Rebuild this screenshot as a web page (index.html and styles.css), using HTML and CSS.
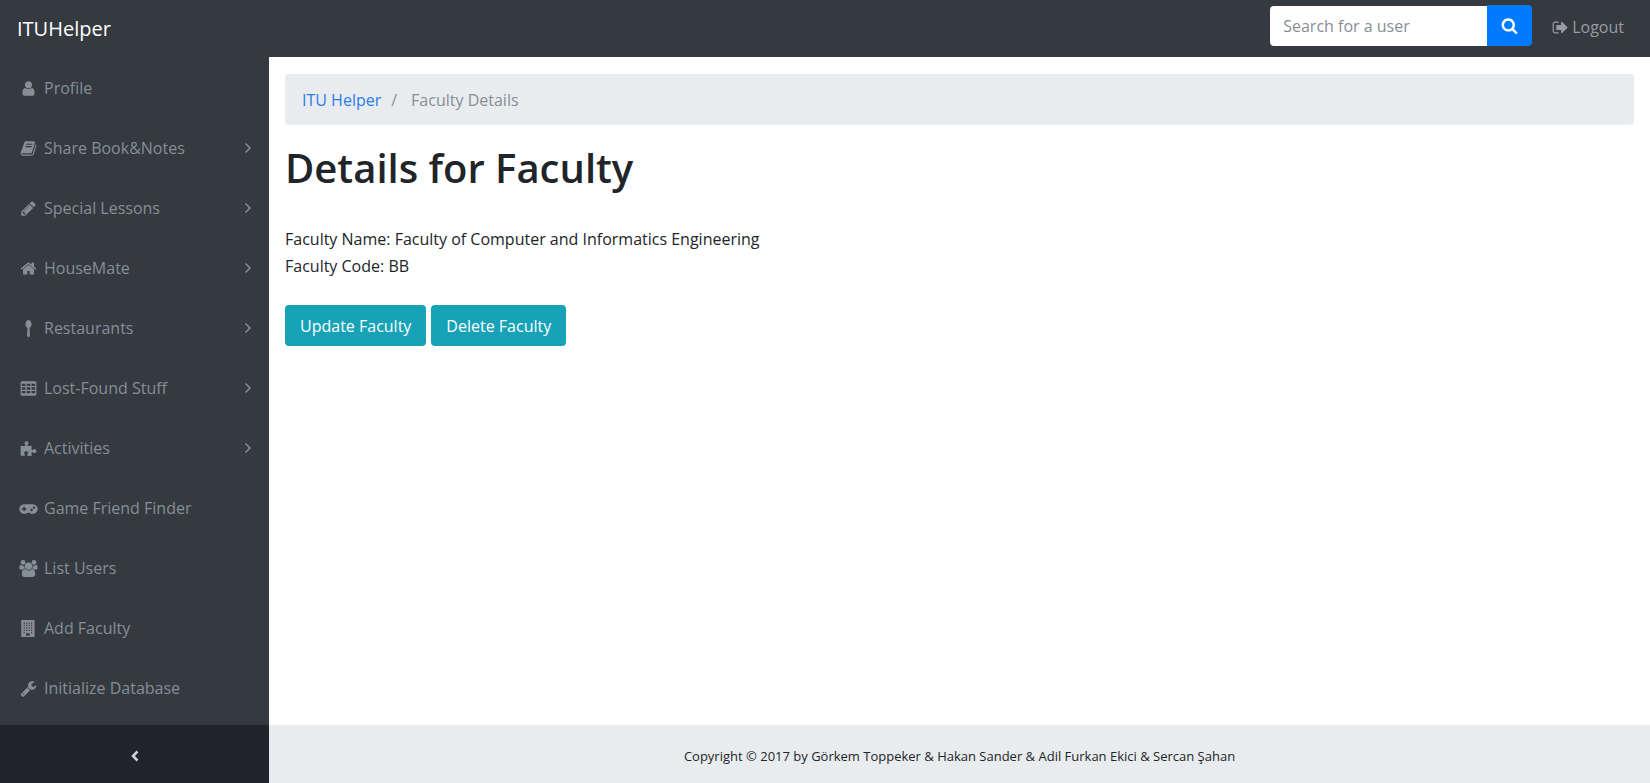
FILE: index.html
```html
<!DOCTYPE html>
<html lang="en">
<head>
<meta charset="utf-8">
<title>ITUHelper</title>
<link rel="stylesheet" href="styles.css">
</head>
<body>
<header class="navbar">
  <a class="brand" href="#">ITUHelper</a>
  <div class="navbar-tools">
    <form class="search">
      <input class="search-input" type="text" placeholder="Search for a user" aria-label="Search for a user">
      <button class="search-button" type="button" aria-label="Search"><svg class="icon" viewBox="0 0 1792 1792"><path d="M1216 832q0-185-131.5-316.5t-316.5-131.5-316.5 131.5-131.5 316.5 131.5 316.5 316.5 131.5 316.5-131.5 131.5-316.5zm512 832q0 52-38 90t-90 38q-54 0-90-38l-343-342q-179 124-399 124-143 0-273.5-55.5t-225-150-150-225-55.5-273.5 55.5-273.5 150-225 225-150 273.5-55.5 273.5 55.5 225 150 150 225 55.5 273.5q0 220-124 399l343 343q37 37 37 90z"/></svg></button>
    </form>
    <a class="logout" href="#"><svg class="icon" viewBox="0 0 1792 1792"><path d="M704 1440q0 4 1 20t.5 26.5-3 23.5-10 19.5-20.5 6.5h-320q-119 0-203.5-84.5t-84.5-203.5v-704q0-119 84.5-203.5t203.5-84.5h320q13 0 22.5 9.5t9.5 22.5q0 4 1 20t.5 26.5-3 23.5-10 19.5-20.5 6.5h-320q-66 0-113 47t-47 113v704q0 66 47 113t113 47h312l11.5 1 11.5 3 8 5.5 7 9 2 13.5zm928-544q0 26-19 45l-544 544q-19 19-45 19t-45-19-19-45v-288h-448q-26 0-45-19t-19-45v-384q0-26 19-45t45-19h448v-288q0-26 19-45t45-19 45 19l544 544q19 19 19 45z"/></svg>Logout</a>
  </div>
</header>
<div class="layout">
  <nav class="sidebar" aria-label="Main">
    <ul class="menu">
      <li><a class="menu-link" href="#"><svg class="icon" viewBox="0 0 1792 1792"><path d="M1536 1399q0 109-62.5 187t-150.5 78h-854q-88 0-150.5-78t-62.5-187q0-85 8.5-160.5t31.5-152 58.5-131 94-89 134.5-34.5q131 128 313 128t313-128q76 0 134.5 34.5t94 89 58.5 131 31.5 152 8.5 160.5zm-256-887q0 159-112.5 271.5t-271.5 112.5-271.5-112.5-112.5-271.5 112.5-271.5 271.5-112.5 271.5 112.5 112.5 271.5z"/></svg><span>Profile</span></a></li>
      <li><a class="menu-link" href="#"><svg class="icon" viewBox="0 0 1792 1792"><path d="M1703 478q40 57 18 129l-275 906q-19 64-76.5 107.5t-122.5 43.5h-923q-77 0-148.5-53.5t-99.5-131.5q-24-67-2-127 0-4 3-27t4-37q1-8-3-21.5t-3-19.5q2-11 8-21t16.5-23.5 16.5-23.5q23-38 45-91.5t30-91.5q3-10 .5-30t-.5-28q3-11 17-28t17-23q21-36 42-92t25-90q1-9-2.5-32t.5-28q4-13 22-30.5t22-22.5q19-26 42.5-84.5t27.5-96.5q1-8-3-25.5t-2-26.5q2-8 9-18t18-23 17-21q8-12 16.5-30.5t15-35 16-36 19.5-32 26.5-23.5 36-11.5 47.5 5.5l-1 3q38-9 51-9h761q74 0 114 56t18 130l-274 906q-36 119-71.5 153.5t-128.5 34.5h-869q-27 0-38 15-11 16-1 43 24 70 144 70h923q29 0 56-15.5t35-41.5l300-987q7-22 5-57 38 15 59 43zm-1064 2q-4 13 2 22.5t20 9.5h608q13 0 25.5-9.5t16.5-22.5l21-64q4-13-2-22.5t-20-9.5h-608q-13 0-25.5 9.5t-16.5 22.5zm-83 256q-4 13 2 22.5t20 9.5h608q13 0 25.5-9.5t16.5-22.5l21-64q4-13-2-22.5t-20-9.5h-608q-13 0-25.5 9.5t-16.5 22.5z"/></svg><span>Share Book&amp;Notes</span><svg class="chevron" viewBox="0 0 8 12"><path d="M1.500 1.500 6 6 1.500 10.500"/></svg></a></li>
      <li><a class="menu-link" href="#"><svg class="icon" viewBox="0 0 1792 1792"><path d="M491 1536l91-91-235-235-91 91v107h128v128h107zm523-928q0-22-22-22-10 0-17 7l-542 542q-7 7-7 17 0 22 22 22 10 0 17-7l542-542q7-7 7-17zm-54-192l416 416-832 832h-416v-416zm683 96q0 53-37 90l-166 166-416-416 166-165q36-38 90-38 53 0 91 38l235 234q37 39 37 91z"/></svg><span>Special Lessons</span><svg class="chevron" viewBox="0 0 8 12"><path d="M1.500 1.500 6 6 1.500 10.500"/></svg></a></li>
      <li><a class="menu-link" href="#"><svg class="icon" viewBox="0 0 1792 1792"><path d="M1472 992v480q0 26-19 45t-45 19h-384v-384h-256v384h-384q-26 0-45-19t-19-45v-480q0-1 .5-3t.5-3l575-474 575 474q1 2 1 6zm223-69l-62 74q-8 9-21 11h-3q-13 0-21-7l-692-577-692 577q-12 8-24 7-13-2-21-11l-62-74q-8-10-7-23.5t11-21.500l719-599q32-26 76-26t76 26l244 204v-195q0-14 9-23t23-9h192q14 0 23 9t9 23v408l219 182q10 8 11 21.500t-7 23.500z"/></svg><span>HouseMate</span><svg class="chevron" viewBox="0 0 8 12"><path d="M1.500 1.500 6 6 1.500 10.500"/></svg></a></li>
      <li><a class="menu-link" href="#"><svg class="icon" viewBox="0 0 1792 1792"><path d="M1216 448q0 150-60 250t-150 135l40 815q2 58-37 101t-97 43h-32q-58 0-97-43t-37-101l40-815q-90-35-150-135t-60-250q0-120 44-223t116-164 160-61 160 61 116 164 44 223z"/></svg><span>Restaurants</span><svg class="chevron" viewBox="0 0 8 12"><path d="M1.500 1.500 6 6 1.500 10.500"/></svg></a></li>
      <li><a class="menu-link" href="#"><svg class="icon" viewBox="0 0 1792 1792"><path fill-rule="evenodd" d="M224 128h1344q66 0 113 47t47 113v1216q0 66-47 113t-113 47H224q-66 0-113-47t-47-113V288q0-66 47-113t113-47zM192 384v256h384V384zM704 384v256h384V384zM1216 384v256h384V384zM192 768v256h384V768zM704 768v256h384V768zM1216 768v256h384V768zM192 1152v256h384v-256zM704 1152v256h384v-256zM1216 1152v256h384v-256z"/></svg><span>Lost-Found Stuff</span><svg class="chevron" viewBox="0 0 8 12"><path d="M1.500 1.500 6 6 1.500 10.500"/></svg></a></li>
      <li><a class="menu-link" href="#"><svg class="icon" viewBox="0 0 1792 1792"><path d="M64 612q200 40 360 30c90-8 136-42 136-90 0-60-80-90-80-218C480 206 570 128 690 128s205 72 205 192c0 130-95 160-95 240 0 62 55 84 130 84 100 0 190-24 310-32-12 110-30 200-30 300 0 80 26 130 90 130 84 0 105-90 228-90 120 0 200 90 200 210 0 125-75 215-195 215-130 0-155-80-233-80-50 0-85 36-85 96 0 90 25 150 25 255-130 16-240 26-340 26-90 0-140-28-140-90 0-74 95-110 95-230 0-110-90-180-200-180-120 0-215 70-215 190 0 125 85 160 85 222 0 60-40 88-120 88-115 0-220-10-341-38z"/></svg><span>Activities</span><svg class="chevron" viewBox="0 0 8 12"><path d="M1.500 1.500 6 6 1.500 10.500"/></svg></a></li>
      <li><a class="menu-link" href="#"><svg class="icon icon-wide" viewBox="0 0 1920 1792"><path fill-rule="evenodd" d="M512 448h896a512 512 0 1 1-338 896H850A512 512 0 1 1 512 448zM416 704v160H256v160h160v160h160v-160h160V864H576V704zM1280 928a128 128 0 1 0 0 256 128 128 0 1 0 0-256zM1536 672a128 128 0 1 0 0 256 128 128 0 1 0 0-256z"/></svg><span>Game Friend Finder</span></a></li>
      <li><a class="menu-link" href="#"><svg class="icon icon-wide" viewBox="0 0 1920 1792"><circle cx="384" cy="256" r="256"/><circle cx="1536" cy="256" r="256"/><circle cx="960" cy="640" r="384"/><path d="M593 896q-162 5-265 128H194q-82 0-138-40.500T0 865q0-353 124-353 6 0 43.500 21t97.500 42.500T384 597q67 0 133-23-5 37-5 66 0 139 81 256zM1664 1533q0 120-73 189.500t-194 69.500H523q-121 0-194-69.500T256 1533q0-53 3.500-103.500t14-109T300 1212t43-97.500 62-81 85.500-53.500T602 960q10 0 43 21.500t73 48 107 48 135 21.500 135-21.500 107-48 73-48 43-21.500q61 0 111.500 20t85.500 53.500 62 81 43 97.500 26.500 108.500 14 109 3.500 103.500zM1920 865q0 78-56 118.500t-138 40.500h-134q-103-123-265-128 81-117 81-256 0-29-5-66 66 23 133 23 59 0 119-21.500t97.500-42.500 43.500-21q124 0 124 353z"/></svg><span>List Users</span></a></li>
      <li><a class="menu-link" href="#"><svg class="icon" viewBox="0 0 1792 1792"><path fill-rule="evenodd" d="M192 0h1280q64 0 64 64v1664q0 64-64 64H192q-64 0-64-64V64q0-64 64-64zM384 256v128h128V256zM640 256v128h128V256zM896 256v128h128V256zM1152 256v128h128V256zM384 512v128h128V512zM640 512v128h128V512zM896 512v128h128V512zM1152 512v128h128V512zM384 768v128h128V768zM640 768v128h128V768zM896 768v128h128V768zM1152 768v128h128V768zM384 1024v128h128v-128zM640 1024v128h128v-128zM896 1024v128h128v-128zM1152 1024v128h128v-128zM384 1280v128h128v-128zM1152 1280v128h128v-128zM640 1408v256h384v-256z"/></svg><span>Add Faculty</span></a></li>
      <li><a class="menu-link" href="#"><svg class="icon" viewBox="0 0 1792 1792"><path d="M448 1472q0-26-19-45t-45-19-45 19-19 45 19 45 45 19 45-19 19-45zm644-420l-682 682q-37 37-90 37-52 0-91-37l-106-108q-38-36-38-90 0-53 38-91l681-681q39 98 114.500 173.500t173.500 114.500zm634-435q0 39-23 106-47 134-164.500 217.500t-258.500 83.500q-185 0-316.500-131.500t-131.500-316.500 131.500-316.500 316.500-131.500q58 0 121.500 16.500t107.500 46.500q16 11 16 28t-16 28l-293 169v224l193 107q5-3 79-48.500t135.500-81 70.500-35.500q15 0 23.500 10t8.500 25z"/></svg><span>Initialize Database</span></a></li>
    </ul>
    <button class="sidebar-toggle" type="button" aria-label="Collapse menu"><svg class="chevron chevron-bold" viewBox="0 0 8 12"><path d="M6.500 1.500 2 6 6.500 10.500"/></svg></button>
  </nav>
  <div class="page">
    <main class="content">
      <nav class="breadcrumb" aria-label="Breadcrumb">
        <a class="breadcrumb-link" href="#">ITU Helper</a>
        <span class="breadcrumb-separator">/</span>
        <span class="breadcrumb-current">Faculty Details</span>
      </nav>
      <h1 class="title">Details for Faculty</h1>
      <p class="details">Faculty Name: Faculty of Computer and Informatics Engineering<br>Faculty Code: BB</p>
      <div class="actions">
        <button class="button" type="button">Update Faculty</button>
        <button class="button" type="button">Delete Faculty</button>
      </div>
    </main>
    <footer class="footer">Copyright © 2017 by Görkem Toppeker &amp; Hakan Sander &amp; Adil Furkan Ekici &amp; Sercan Şahan</footer>
  </div>
</div>
</body>
</html>
```
FILE: styles.css
```css
* {
  box-sizing: border-box;
}

body {
  display: flex;
  flex-direction: column;
  min-height: 100vh;
  margin: 0;
  background: #fff;
  color: #212529;
  font-family: "Segoe UI", "Open Sans", "Noto Sans", sans-serif;
  font-size: 16px;
  line-height: 27px;
}

a {
  text-decoration: none;
}

button,
input {
  font: inherit;
}

.icon {
  width: 17px;
  height: 17px;
  fill: currentColor;
}

.icon-wide {
  width: 19px;
}

.navbar {
  display: flex;
  align-items: center;
  justify-content: space-between;
  height: 57px;
  padding: 0 26px 6px 17px;
  background: #343a40;
}

.brand {
  padding-top: 6px;
  color: #fff;
  font-size: 20px;
}

.navbar-tools,
.search,
.logout {
  display: flex;
  align-items: center;
}

.navbar-tools {
  gap: 20px;
}

.search-input {
  width: 217px;
  height: 40px;
  padding: 1px 13px 0;
  border: 0;
  border-radius: 4px 0 0 4px;
  background: #fff;
  color: #495057;
}

.search-input::placeholder {
  color: #868e96;
  opacity: 1;
}

.search-button {
  display: flex;
  align-items: center;
  justify-content: center;
  width: 45px;
  height: 41px;
  padding: 0;
  border: 0;
  border-radius: 0 4px 4px 0;
  background: #007bff;
  color: #fff;
}

.logout {
  gap: 3px;
  padding-top: 4px;
  color: #999c9f;
}

.layout {
  display: flex;
  flex: 1;
}

.sidebar {
  display: flex;
  flex-direction: column;
  flex: none;
  width: 269px;
  background: #343a40;
}

.menu {
  flex: 1;
  margin: 0;
  padding: 1px 0 0;
  list-style: none;
}

.menu-link {
  display: grid;
  grid-template-columns: 22px 1fr 8px;
  align-items: center;
  column-gap: 5px;
  height: 60px;
  padding: 0 17px;
  color: #868e96;
}

.menu-link .icon {
  justify-self: center;
}

.chevron {
  width: 8px;
  height: 12px;
  fill: none;
  stroke: currentColor;
  stroke-width: 1.5;
}

.chevron-bold {
  stroke-width: 2.5;
}

.sidebar-toggle {
  display: flex;
  align-items: center;
  justify-content: center;
  height: 58px;
  padding: 4px 0 0;
  border: 0;
  background: #212529;
  color: #ced4da;
}

.page {
  display: flex;
  flex: 1;
  flex-direction: column;
}

.content {
  flex: 1;
  padding: 17px 16px;
}

.breadcrumb {
  display: flex;
  gap: 10px;
  margin-bottom: 17px;
  padding: 13px 17px 11px;
  border-radius: 4px;
  background: #e9ecef;
  color: #868e96;
}

.breadcrumb-link {
  color: #2b7de9;
}

.breadcrumb-current {
  padding-left: 4px;
}

.title {
  margin: 0 0 32px;
  font-size: 40px;
  font-weight: 600;
  line-height: 52px;
}

.details {
  margin: 0 0 25px;
}

.actions {
  display: flex;
  gap: 5px;
}

.button {
  height: 41px;
  padding: 1px 15px 0;
  border: 0;
  border-radius: 4px;
  background: #17a2b8;
  color: #fff;
}

.footer {
  padding: 19px 17px 15px;
  background: #e9ecef;
  font-size: 13px;
  line-height: 24px;
  text-align: center;
}
```
